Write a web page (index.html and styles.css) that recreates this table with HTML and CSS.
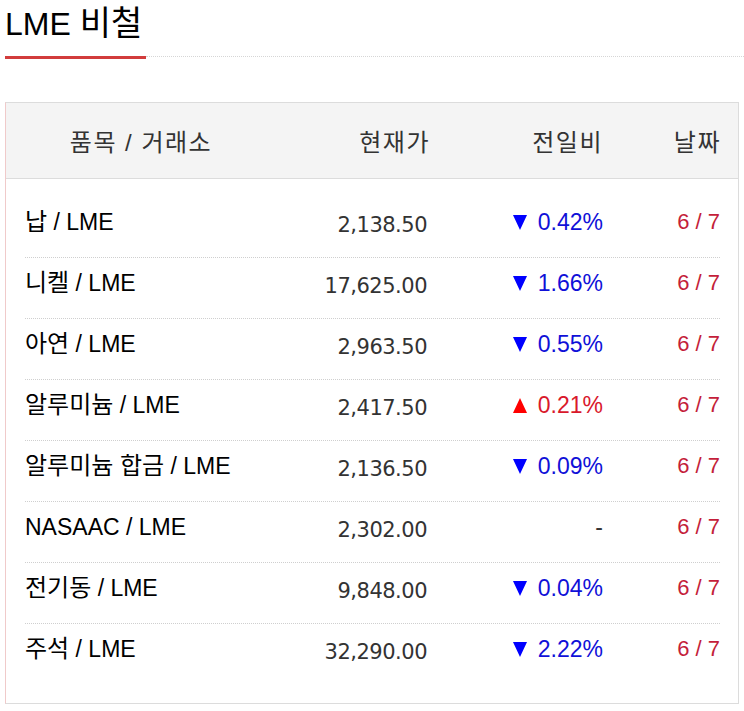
FILE: index.html
```html
<!DOCTYPE html>
<html lang="ko">
<head>
<meta charset="utf-8">
<title>LME 비철</title>
<link rel="stylesheet" href="styles.css">
</head>
<body>
<div class="page">
  <h2 class="title">LME <span class="ko">비철</span></h2>
  <div class="title-rule"><span class="rule-red"></span><span class="rule-dot"></span></div>

  <div class="board">
    <div class="head">
      <div class="h-name">품목 / 거래소</div>
      <div class="h-num">현재가</div>
      <div class="h-num">전일비</div>
      <div class="h-num">날짜</div>
    </div>
    <div class="body">
      <div class="row"><div class="name"><span class="ko">납</span> / LME</div><div class="price">2,138.50</div><div class="chg down"><span class="tri"></span>0.42%</div><div class="date">6 / 7</div></div>
      <div class="row"><div class="name"><span class="ko">니켈</span> / LME</div><div class="price">17,625.00</div><div class="chg down"><span class="tri"></span>1.66%</div><div class="date">6 / 7</div></div>
      <div class="row"><div class="name"><span class="ko">아연</span> / LME</div><div class="price">2,963.50</div><div class="chg down"><span class="tri"></span>0.55%</div><div class="date">6 / 7</div></div>
      <div class="row"><div class="name"><span class="ko">알루미늄</span> / LME</div><div class="price">2,417.50</div><div class="chg up"><span class="tri"></span>0.21%</div><div class="date">6 / 7</div></div>
      <div class="row"><div class="name"><span class="ko">알루미늄 합금</span> / LME</div><div class="price">2,136.50</div><div class="chg down"><span class="tri"></span>0.09%</div><div class="date">6 / 7</div></div>
      <div class="row"><div class="name">NASAAC / LME</div><div class="price">2,302.00</div><div class="chg flat">-</div><div class="date">6 / 7</div></div>
      <div class="row"><div class="name"><span class="ko">전기동</span> / LME</div><div class="price">9,848.00</div><div class="chg down"><span class="tri"></span>0.04%</div><div class="date">6 / 7</div></div>
      <div class="row last"><div class="name"><span class="ko">주석</span> / LME</div><div class="price">32,290.00</div><div class="chg down"><span class="tri"></span>2.22%</div><div class="date">6 / 7</div></div>
    </div>
  </div>
</div>
</body>
</html>
```
FILE: styles.css
```css
html, body {
  margin: 0;
  padding: 0;
  background: #fff;
}
body {
  font-family: "Liberation Sans", "Noto Sans CJK KR", Arial, sans-serif;
  color: #000;
}
.page {
  width: 744px;
}
.title {
  margin: 0;
  padding: 5px 0 0 5px;
  height: 47px;
  font-size: 32px;
  font-weight: normal;
  line-height: 36px;
  color: #000;
}
.title .ko {
  font-size: 34px;
}
.title-rule {
  display: flex;
  align-items: flex-start;
  height: 3px;
  margin-left: 5px;
  margin-top: 4px;
}
.rule-red {
  width: 141px;
  height: 3px;
  background: #d23c3c;
}
.rule-dot {
  flex: 1;
  border-top: 1px dotted #d6d6d6;
}
.board {
  margin: 43px 0 0 5px;
  width: 732px;
  border: 1px solid #dcdcdc;
  border-left-color: #f0caca;
}
.head {
  display: grid;
  grid-template-columns: 270px 154px 173px 118px;
  height: 75px;
  align-items: center;
  background: #f4f4f4;
  border-bottom: 1px solid #dcdcdc;
  font-size: 24px;
  letter-spacing: 1.5px;
  color: #333;
}
.h-name {
  text-align: center;
}
.h-num {
  text-align: right;
}
.body {
  padding: 18px 18px 19px 19px;
}
.row {
  display: grid;
  grid-template-columns: 275px 127px 176px 117px;
  align-items: start;
  border-bottom: 1px dotted #cfcfcf;
  font-size: 23px;
  line-height: 26px;
  padding-top: 12px;
  height: 48px;
}
.row.last {
  border-bottom: none;
}
.name {
  color: #000;
  white-space: nowrap;
}
.name .ko {
  font-size: 24px;
}
.price {
  text-align: right;
  font-family: "DejaVu Sans", Verdana, sans-serif;
  font-size: 21px;
  letter-spacing: -0.5px;
  color: #333;
  padding-top: 3px;
}
.chg {
  display: flex;
  justify-content: flex-end;
  align-items: center;
  height: 26px;
}
.tri {
  width: 0;
  height: 0;
  margin-right: 11px;
  border-left: 7px solid transparent;
  border-right: 7px solid transparent;
}
.chg.down {
  color: #1010d8;
}
.chg.down .tri {
  border-top: 15px solid #0000ff;
}
.chg.up {
  color: #d9182b;
}
.chg.up .tri {
  border-bottom: 15px solid #ff0000;
}
.chg.flat {
  color: #333;
}
.date {
  text-align: right;
  color: #c41e3a;
  font-size: 22px;
}
```
